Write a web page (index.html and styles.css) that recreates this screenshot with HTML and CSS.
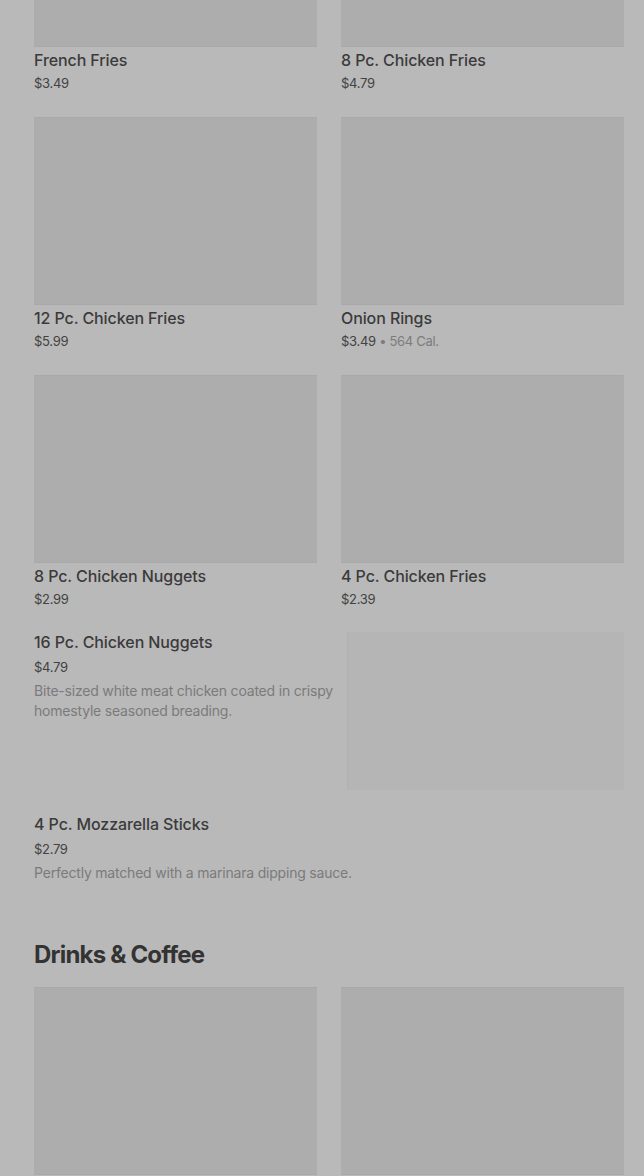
FILE: index.html
```html
<!DOCTYPE html>
<html>
<head>
<meta charset="utf-8">
<link rel="stylesheet" href="styles.css">
</head>
<body>
<div class="page">
  <div class="content">
    <div class="grid">
      <div class="card"><div class="img"></div><div class="title">French Fries</div><div class="price">$3.49</div></div>
      <div class="card"><div class="img"></div><div class="title">8 Pc. Chicken Fries</div><div class="price">$4.79</div></div>
      <div class="card"><div class="img"></div><div class="title">12 Pc. Chicken Fries</div><div class="price">$5.99</div></div>
      <div class="card"><div class="img"></div><div class="title">Onion Rings</div><div class="price">$3.49 <span class="cal">• 564 Cal.</span></div></div>
      <div class="card"><div class="img"></div><div class="title">8 Pc. Chicken Nuggets</div><div class="price">$2.99</div></div>
      <div class="card"><div class="img"></div><div class="title">4 Pc. Chicken Fries</div><div class="price">$2.39</div></div>
    </div>
    <div class="row-item">
      <div class="row-text">
        <div class="title">16 Pc. Chicken Nuggets</div>
        <div class="price lg">$4.79</div>
        <div class="desc">Bite-sized white meat chicken coated in crispy homestyle seasoned breading.</div>
      </div>
      <div class="row-img"></div>
    </div>
    <div class="row-item">
      <div class="row-text">
        <div class="title">4 Pc. Mozzarella Sticks</div>
        <div class="price lg">$2.79</div>
        <div class="desc">Perfectly matched with a marinara dipping sauce.</div>
      </div>
    </div>
    <h2 class="section">Drinks &amp; Coffee</h2>
    <div class="grid">
      <div class="card"><div class="img"></div></div>
      <div class="card"><div class="img"></div></div>
    </div>
  </div>
</div>
</body>
</html>
```
FILE: styles.css
```css
html, body {
  margin: 0;
  padding: 0;
  background: #b9b9b9;
  height: 1176px;
  overflow: hidden;
}
.page {
  font-family: Inter, Roboto, "Liberation Sans", sans-serif;
  padding: 0 20px 0 34px;
}
.content {
  margin-top: -141px;
}
.grid {
  display: grid;
  grid-template-columns: 283px 283px;
  column-gap: 24px;
  row-gap: 25px;
}
.img {
  height: 186px;
  background: #adadad;
  border-top: 1px solid #a9a9a9;
  border-bottom: 1px solid #a9a9a9;
  border-radius: 1px;
}
.title {
  font-size: 16px;
  line-height: 20px;
  font-weight: 500;
  color: #3b3b3b;
  margin-top: 3px;
  letter-spacing: -0.1px;
}
.price {
  font-size: 13px;
  line-height: 18px;
  color: #424242;
  margin-top: 4px;
  letter-spacing: -0.3px;
}
.cal {
  color: #7c7c7c;
}
.row-item {
  display: flex;
  gap: 12px;
  margin-top: 24px;
}
.row-text {
  flex: 1;
}
.row-text .title {
  margin-top: 0;
}
.price.lg {
  margin-top: 6px;
}
.desc {
  font-size: 14px;
  line-height: 20px;
  color: #7b7b7b;
  margin-top: 5px;
  letter-spacing: -0.2px;
}
.row-img {
  width: 276px;
  height: 158px;
  background: #b5b5b5;
  border-left: 1px solid #b1b1b1;
  flex: none;
}
.section {
  font-size: 24px;
  line-height: 28px;
  font-weight: 700;
  color: #333333;
  margin: 58px 0 18px 0;
  letter-spacing: -0.8px;
}
```
